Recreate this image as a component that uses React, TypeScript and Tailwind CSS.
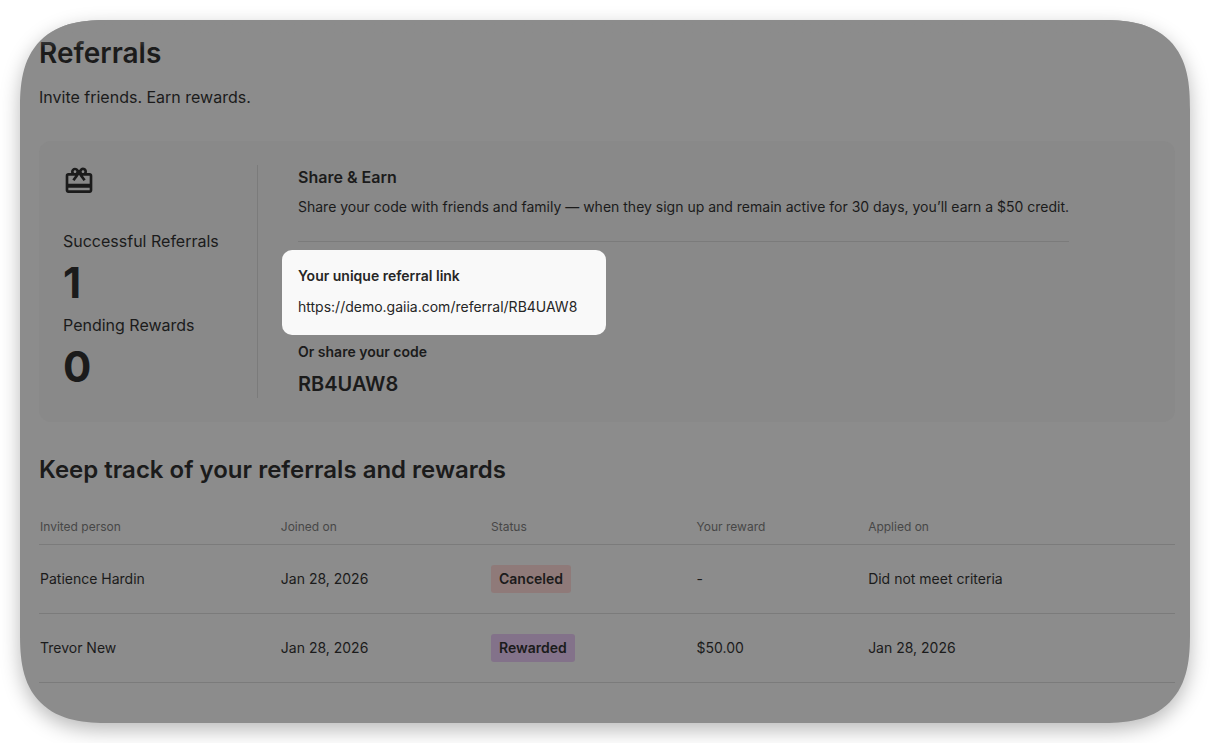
import clsx from "clsx";
import { MdOutlineRedeem } from "react-icons/md";

const referralLink = "https://demo.gaiia.com/referral/RB4UAW8";
const referralCode = "RB4UAW8";

const stats = [
  { label: "Successful Referrals", value: 1 },
  { label: "Pending Rewards", value: 0 },
];

const columns = [
  { label: "Invited person", width: "w-[21.2%]" },
  { label: "Joined on", width: "w-[18.5%]" },
  { label: "Status", width: "w-[18.1%]" },
  { label: "Your reward", width: "w-[15.1%]" },
  { label: "Applied on", width: "w-[27.1%]" },
];

const referrals = [
  {
    name: "Patience Hardin",
    joined: "Jan 28, 2026",
    status: "Canceled",
    reward: "-",
    applied: "Did not meet criteria",
  },
  {
    name: "Trevor New",
    joined: "Jan 28, 2026",
    status: "Rewarded",
    reward: "$50.00",
    applied: "Jan 28, 2026",
  },
];

function StatusBadge({ status }: { status: string }) {
  return (
    <span
      className={clsx(
        "inline-block rounded-[3px] px-2 py-1 font-semibold",
        status === "Canceled" ? "bg-[#8f7a79]" : "bg-[#83728a]",
      )}
    >
      {status}
    </span>
  );
}

export default function App() {
  return (
    <div className="flex min-h-screen bg-white p-5 font-['Inter',sans-serif] text-[#1b1b1b]">
      <main className="relative flex-1 overflow-hidden rounded-[90px] bg-[#8c8c8c] pt-[15px] pr-[15px] pb-10 pl-[19px] shadow-[0_7px_20px_rgba(0,0,0,0.28)] [corner-shape:superellipse(1.42)]">
        <div className="pointer-events-none absolute inset-x-0 top-0 h-7 bg-linear-to-b from-[#8c8c8c] to-transparent" />

        <h1 className="text-[28px] leading-9 font-semibold">Referrals</h1>
        <p className="mt-3.5 text-base">Invite friends. Earn rewards.</p>

        <section className="mt-8 flex rounded-xl bg-[#898989] p-6">
          <div className="w-[195px] shrink-0 border-r border-[#7b7b7b]">
            <MdOutlineRedeem className="size-8" />
            <dl className="mt-8">
              {stats.map((stat) => (
                <div key={stat.label}>
                  <dt className="text-base">{stat.label}</dt>
                  <dd className="text-[42px] leading-[60px] font-bold">
                    {stat.value}
                  </dd>
                </div>
              ))}
            </dl>
          </div>

          <div className="pl-10">
            <h2 className="text-base font-semibold">Share &amp; Earn</h2>
            <p className="mt-2 border-b border-[#7b7b7b] pb-6 text-sm">
              Share your code with friends and family — when they sign up and
              remain active for 30 days, you’ll earn a $50 credit.
            </p>
            <div className="mt-2 -ml-4 w-fit rounded-[10px] bg-[#f9f9f9] pt-4 pr-[29px] pb-[18px] pl-4 text-sm text-[#262626]">
              <h3 className="font-semibold">Your unique referral link</h3>
              <a href={referralLink} className="mt-[11px] block">
                {referralLink}
              </a>
            </div>
            <h3 className="mt-[7px] text-sm font-semibold">
              Or share your code
            </h3>
            <p className="mt-2 text-xl font-semibold">{referralCode}</p>
          </div>
        </section>

        <h2 className="mt-8 text-2xl font-semibold">
          Keep track of your referrals and rewards
        </h2>

        <table className="mt-6 w-full table-fixed text-left text-sm">
          <thead>
            <tr className="border-b border-[#7b7b7b] text-xs text-[#474747]">
              {columns.map((column) => (
                <th
                  key={column.label}
                  className={clsx("py-[9px] pl-px font-normal", column.width)}
                >
                  {column.label}
                </th>
              ))}
            </tr>
          </thead>
          <tbody>
            {referrals.map((referral) => (
              <tr key={referral.name} className="border-b border-[#7b7b7b]">
                <td className="py-5 pl-px">{referral.name}</td>
                <td className="py-5 pl-px">{referral.joined}</td>
                <td className="py-5 pl-px">
                  <StatusBadge status={referral.status} />
                </td>
                <td className="py-5 pl-px">{referral.reward}</td>
                <td className="py-5 pl-px">{referral.applied}</td>
              </tr>
            ))}
          </tbody>
        </table>
      </main>
    </div>
  );
}
